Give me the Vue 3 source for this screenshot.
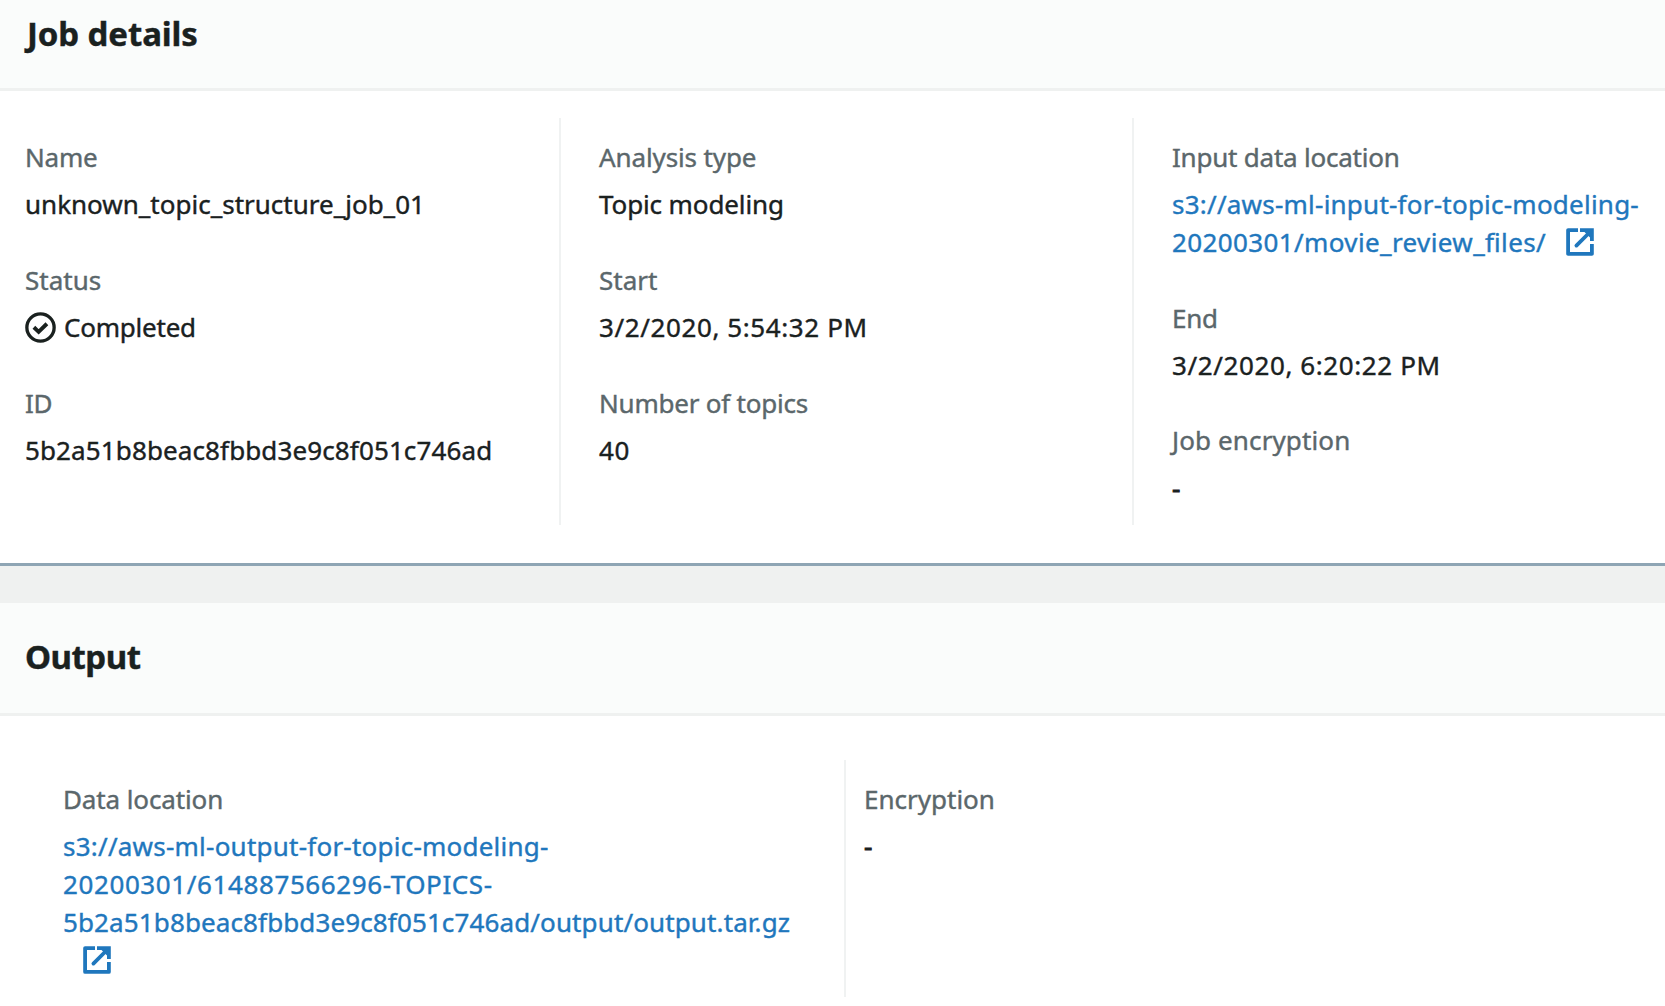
<script setup>
import { h } from 'vue'

const ExternalIcon = () =>
  h('svg', { class: 'external', viewBox: '0 0 28 28', fill: 'none', stroke: 'currentColor', 'stroke-width': 3.8, 'aria-hidden': 'true' }, [
    h('path', { d: 'M12 2.1H2.1V25.9H25.9V16', 'stroke-linejoin': 'round' }),
    h('path', { d: 'M10.4 17.6L23 5', 'stroke-linecap': 'round' }),
    h('path', { d: 'M14 0.2H27.8V13H24V9.5L18.5 4H14Z', fill: 'currentColor', stroke: 'none' }),
  ])

const columns = [
  [
    { label: 'Name', labelFit: 'tight', lines: ['unknown_topic_structure_job_01'] },
    { label: 'Status', lines: ['Completed'], status: true, fit: 'tight' },
    { label: 'ID', labelFit: 'tight', lines: ['5b2a51b8beac8fbbd3e9c8f051c746ad'], fit: 'loose-1' },
  ],
  [
    { label: 'Analysis type', labelFit: 'tight-0', lines: ['Topic modeling'], fit: 'tight-0' },
    { label: 'Start', lines: ['3/2/2020, 5:54:32 PM'], fit: 'loose-4' },
    { label: 'Number of topics', labelFit: 'tight', lines: ['40'], fit: 'loose-4' },
  ],
  [
    { label: 'Input data location', labelFit: 'tight', lines: ['s3://aws-ml-input-for-topic-modeling-', '20200301/movie_review_files/'], link: true, fit: 'loose-2' },
    { label: 'End', labelFit: 'tight', lines: ['3/2/2020, 6:20:22 PM'], fit: 'loose-4' },
    { label: 'Job encryption', labelFit: 'loose-1', lines: ['-'], fit: 'dash' },
  ],
]
</script>

<template>
  <main class="page">
    <section class="panel details">
      <header><h2>Job details</h2></header>
      <div class="columns">
        <dl v-for="(col, i) in columns" :key="i">
          <div v-for="item in col" :key="item.label" class="item">
            <dt :class="item.labelFit">{{ item.label }}</dt>
            <dd :class="item.fit">
              <a v-if="item.link" href="#">
                <span>{{ item.lines[0] }}</span><br>
                <span class="loose-3">{{ item.lines[1] }}</span><ExternalIcon />
              </a>
              <span v-else-if="item.status" class="status">
                <svg viewBox="0 0 30 30" fill="none" stroke="currentColor" stroke-width="3.2" aria-hidden="true">
                  <circle cx="15" cy="15" r="13.2" />
                  <path d="M8.6 14.8L13.2 19.2L21.2 11.4" stroke-width="3.8" />
                </svg>
                {{ item.lines[0] }}
              </span>
              <template v-else>{{ item.lines[0] }}</template>
            </dd>
          </div>
        </dl>
      </div>
    </section>

    <section class="panel output">
      <header><h2>Output</h2></header>
      <div class="columns">
        <dl>
          <div class="item">
            <dt class="tight-0">Data location</dt>
            <dd>
              <a href="#">
                <span class="loose-2">s3://aws-ml-output-for-topic-modeling-</span><br>
                <span class="loose-4">20200301/614887566296-TOPICS-</span><br>
                <span class="loose-1">5b2a51b8beac8fbbd3e9c8f051c746ad/output/output.tar.gz</span><br>
                <ExternalIcon />
              </a>
            </dd>
          </div>
        </dl>
        <dl>
          <div class="item">
            <dt>Encryption</dt>
            <dd class="dash">-</dd>
          </div>
        </dl>
      </div>
    </section>
  </main>
</template>

<style>
body {
  margin: 0;
  background: #eff1f0;
}
</style>

<style scoped>
.page {
  width: 1665px;
  height: 1006px;
  overflow: hidden;
  display: flex;
  flex-direction: column;
  gap: 37px;
  background: #eff1f0;
  color: #1a211f;
  font: 400 26px/37.8px "Noto Sans", "Open Sans", sans-serif;
  font-feature-settings: "liga" 1;
  -webkit-text-stroke: 0.4px currentColor;
}
.panel {
  box-sizing: border-box;
  background: #fff;
}
.details {
  height: 566px;
  border-bottom: 3px solid #8ea5b4;
}
.output {
  flex: 1;
}
header {
  box-sizing: border-box;
  display: flex;
  align-items: center;
  background: #fafcfb;
  border-bottom: 3px solid #eff1f0;
  padding-left: 25px;
}
.details header {
  height: 91px;
  padding-left: 27px;
  padding-bottom: 20px;
}
.output header {
  height: 113px;
  padding-bottom: 2px;
}
h2 {
  margin: 0;
  font-size: 33px;
  line-height: 44px;
  font-weight: 700;
}
.details h2 {
  letter-spacing: -0.1px;
}
.output h2 {
  letter-spacing: -0.5px;
}
.columns {
  display: grid;
}
.details .columns {
  grid-template-columns: 559px 573px 1fr;
  height: 407px;
  padding-top: 27px;
}
.output .columns {
  grid-template-columns: 844px 1fr;
  height: 237px;
  padding-top: 44px;
}
dl {
  box-sizing: border-box;
  margin: 0;
  padding-top: 21px;
  padding-left: 38px;
  display: flex;
  flex-direction: column;
  gap: 37.8px;
  white-space: nowrap;
}
dl + dl {
  border-left: 2px solid #f0f2f2;
}
.details dl:first-child {
  padding-left: 25px;
}
.output dl {
  padding-left: 63px;
}
.output dl + dl {
  padding-left: 18px;
}
.item {
  display: flex;
  flex-direction: column;
  gap: 9.4px;
}
dt {
  color: #5b676b;
}
dd {
  margin: 0;
}
a {
  color: #1f77bd;
  text-decoration: none;
}
.tight { letter-spacing: -0.22px; }
.tight-0 { letter-spacing: -0.12px; }
.loose-1 { letter-spacing: 0.12px; }
.loose-2 { letter-spacing: 0.23px; }
.loose-3 { letter-spacing: 0.38px; }
.loose-4 { letter-spacing: 0.6px; }
.dash { -webkit-text-stroke-width: 0.9px; }
.external {
  width: 28px;
  height: 28px;
  margin-left: 20px;
  vertical-align: -4px;
}
.status {
  display: flex;
  align-items: center;
  gap: 8px;
}
.status svg {
  width: 31px;
  height: 31px;
}
</style>
